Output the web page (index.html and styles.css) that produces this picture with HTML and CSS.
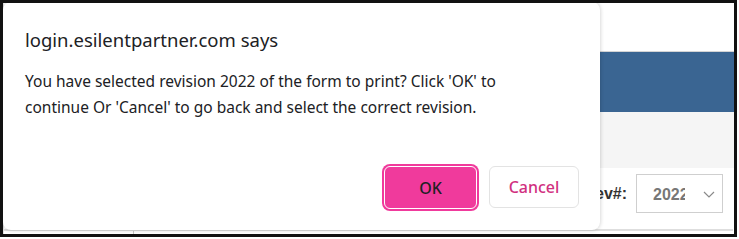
FILE: index.html
```html
<!DOCTYPE html>
<html lang="en">

<head>
    <meta charset="UTF-8">
    <meta name="viewport" content="width=device-width, initial-scale=1.0">
    <title>Print revision</title>
    <link rel="stylesheet" href="styles.css">
</head>

<body>
    <div class="screen">
        <!-- Page behind the alert -->
        <div class="page">
            <div class="page-top"></div>
            <div class="page-band"></div>
            <div class="page-toolbar"></div>
            <div class="page-row">
                <label class="rev-label" for="rev">Rev#:</label>
                <div class="rev-select" id="rev">
                    <span class="rev-value">2022</span>
                    <svg class="rev-chevron" width="12" height="7" viewBox="0 0 12 7">
                        <path d="M1 1 L6 6 L11 1" fill="none" stroke="#8a8a8a" stroke-width="1.2" />
                    </svg>
                </div>
            </div>
            <div class="page-foot">
                <div class="page-foot-col"></div>
            </div>
        </div>

        <!-- Browser alert -->
        <div class="dialog">
            <div class="dialog-title">login.esilentpartner.com says</div>
            <div class="dialog-message">
                You have selected revision 2022 of the form to print? Click 'OK' to<br>
                continue Or 'Cancel' to go back and select the correct revision.
            </div>
            <div class="dialog-actions">
                <button class="btn btn-primary">OK</button>
                <button class="btn btn-secondary">Cancel</button>
            </div>
        </div>
    </div>
</body>

</html>
```

FILE: styles.css
```css
body {
    margin: 0;
    background: #fff;
    font-family: "Noto Sans", "Open Sans", sans-serif;
}

.screen {
    position: relative;
    width: 737px;
    height: 237px;
    box-sizing: border-box;
    border: 3px solid #111;
    overflow: hidden;
}

/* page behind */
.page {
    display: flex;
    flex-direction: column;
    height: 100%;
    border-left: 1px solid #e2e2e2;
}

.page-top {
    height: 48px;
    border-bottom: 1px solid #d4d4d4;
}

.page-band {
    height: 60px;
    background: #3a6592;
}

.page-toolbar {
    height: 57px;
    background: #f5f5f5;
}

.page-row {
    height: 61px;
    display: flex;
    justify-content: flex-end;
    align-items: flex-start;
    gap: 9px;
    padding: 6px 11px 0 0;
    box-sizing: border-box;
}

.rev-label {
    margin-top: 11px;
    font-family: "Liberation Sans", Arial, sans-serif;
    font-weight: bold;
    font-size: 16px;
    color: #333;
}

.rev-select {
    width: 87px;
    height: 39px;
    box-sizing: border-box;
    border: 1px solid #cfcfcf;
    display: flex;
    align-items: center;
    padding: 2px 6px 0 16px;
}

.rev-value {
    width: 32px;
    overflow: hidden;
    white-space: nowrap;
    font-family: "Liberation Sans", Arial, sans-serif;
    font-weight: bold;
    font-size: 16px;
    color: #777;
}

.rev-chevron {
    margin-left: auto;
    margin-right: 1px;
}

.page-foot {
    flex: 1;
    border-top: 2px solid #dedede;
    margin-right: 1px;
}

.page-foot-col {
    margin-left: 129px;
    width: 1px;
    height: 3px;
    background: #c8c8c8;
}

/* alert */
.dialog {
    position: absolute;
    left: 0;
    top: -1px;
    width: 597px;
    height: 228px;
    box-sizing: border-box;
    padding: 26px 21px 21px 22px;
    background: #fff;
    border-radius: 8px;
    box-shadow: 0 0 4px rgba(0, 0, 0, 0.22);
    display: flex;
    flex-direction: column;
}

.dialog-title {
    font-size: 18.5px;
    line-height: 24px;
    color: #202124;
    margin-bottom: 16px;
}

.dialog-message {
    font-size: 15.5px;
    line-height: 26px;
    color: #202124;
}

.dialog-actions {
    margin-top: auto;
    display: flex;
    justify-content: flex-end;
    gap: 10px;
}

.btn {
    height: 43px;
    border-radius: 6px;
    font-family: "Noto Sans", "Open Sans", sans-serif;
    font-size: 16px;
    font-weight: 500;
    cursor: pointer;
}

.btn-primary {
    width: 93px;
    background: #f03a9c;
    color: #202124;
    border: 1px solid #fff;
    box-shadow: 0 0 0 2px #f03a9c;
    margin-right: 2px;
}

.btn-secondary {
    width: 90px;
    height: 42px;
    background: #fff;
    color: #d1307f;
    border: 1px solid #e3e3e3;
}
```
